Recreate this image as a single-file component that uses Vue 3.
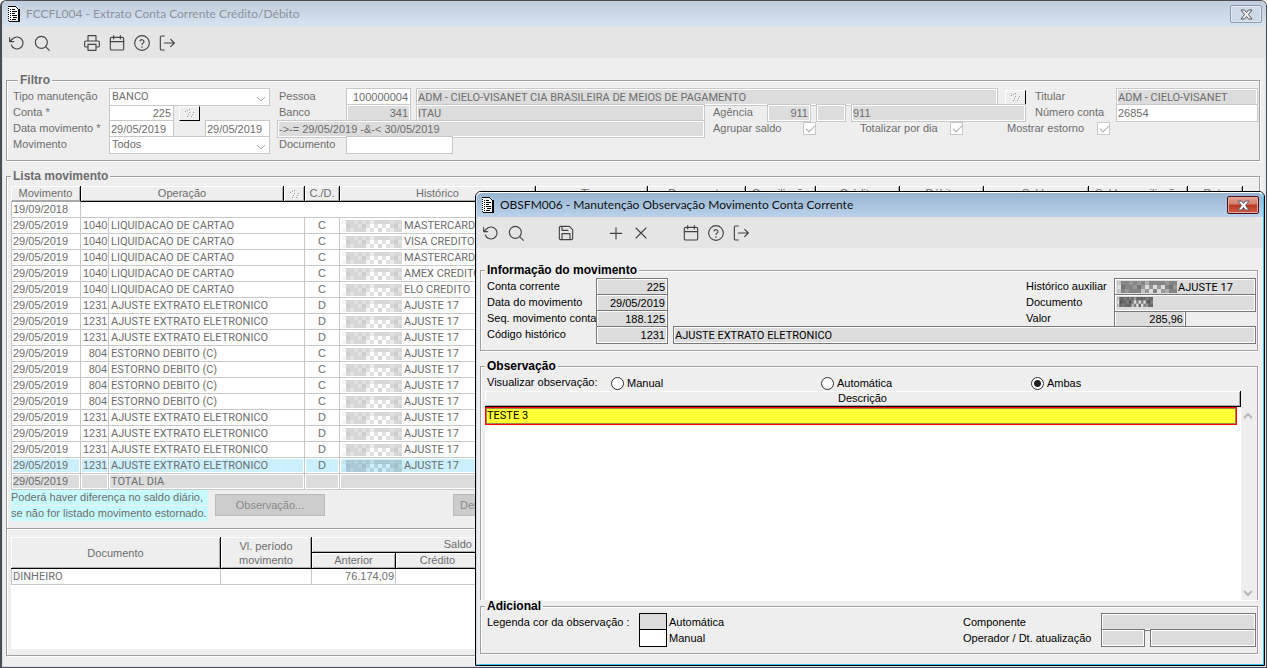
<script setup>
import { ref } from 'vue'

const mainTools = ['undo', 'search', '', 'print', 'calendar', 'help', 'exit']
const dialogTools = ['undo', 'search', '', 'save', '', 'plus', 'close', '', 'calendar', 'help', 'exit']
const toolNames = {
  undo: 'Desfazer',
  search: 'Pesquisar',
  print: 'Imprimir',
  calendar: 'Calendário',
  help: 'Ajuda',
  exit: 'Sair',
  save: 'Salvar',
  plus: 'Incluir',
  close: 'Excluir',
}

const row = (code, name, type, history) => ({ code, name, type, history })
const card = (h) => row('1040', 'LIQUIDACAO DE CARTAO', 'C', h)
const adjust = () => row('1231', 'AJUSTE EXTRATO ELETRONICO', 'D', 'AJUSTE 17')
const reversal = () => row('804', 'ESTORNO DEBITO (C)', 'C', 'AJUSTE 17')
const rows = [
  card('MASTERCARD'),
  card('VISA CREDITO'),
  card('MASTERCARD'),
  card('AMEX CREDITO'),
  card('ELO CREDITO'),
  adjust(), adjust(), adjust(),
  reversal(), reversal(), reversal(), reversal(),
  adjust(), adjust(), adjust(), adjust(),
]
const extraHeads = ['Tipo', 'Documento', 'Conciliação', 'Crédito', 'Débito', 'Saldo', 'Saldo conciliação', 'Data']
const widths = [70, 28, 175, 21, 35, 0, 112, 98, 70, 84, 84, 105, 99, 55]

const shades = [
  [1, 4, 4, 3, 4, 3, 4, 2, 4, 4, 4, 4, 3, 4, 4],
  [0, 5, 4, 4, 3, 5, 3, 0, 3, 0, 3, 0, 4, 5, 3],
  [1, 4, 3, 4, 4, 4, 1, 3, 0, 4, 0, 3, 2, 4, 4],
]
const cells = shades.flatMap((line, y) => line.map((s, x) => ({ x: x * 4, y: y * 4, o: s * 0.055 })))

const view = ref('Ambas')
</script>

<template>
  <svg class="defs" aria-hidden="true">
    <symbol id="undo" viewBox="0 0 24 24"><path d="M1 4v6h6M3.5 15a9 9 0 1 0 2.1-9.4L1 10" /></symbol>
    <symbol id="search" viewBox="0 0 24 24"><circle cx="11" cy="11" r="9" /><path d="M23 23l-5.5-5.5" /></symbol>
    <symbol id="print" viewBox="0 0 24 24"><path d="M6 9V1h12v8M6 18H3a2 2 0 0 1-2-2v-5a2 2 0 0 1 2-2h18a2 2 0 0 1 2 2v5a2 2 0 0 1-2 2h-3M6 14h12v9H6z" /></symbol>
    <symbol id="calendar" viewBox="0 0 24 24"><rect x="2" y="3.5" width="20" height="19" rx="2" /><path d="M7 1v5M17 1v5M2 10h20" /></symbol>
    <symbol id="help" viewBox="0 0 24 24"><circle cx="12" cy="12" r="11" /><path d="M9 9a3.1 3.1 0 0 1 6 1c0 2-3 2.5-3 4.300M12 17.500v1" /></symbol>
    <symbol id="exit" viewBox="0 0 24 24"><path d="M8 1.500H4a2 2 0 0 0-2 2v17a2 2 0 0 0 2 2h4M8 12h15M17.500 6.500L23 12l-5.500 5.500" /></symbol>
    <symbol id="save" viewBox="0 0 24 24"><path d="M20 22H4a2 2 0 0 1-2-2V4a2 2 0 0 1 2-2h13l5 5v13a2 2 0 0 1-2 2zM6 22v-9h12v9M6 2v6h9" /></symbol>
    <symbol id="plus" viewBox="0 0 24 24"><path d="M12 4v17M3.500 12.500h17" /></symbol>
    <symbol id="close" viewBox="0 0 24 24"><path d="M4.500 4.500l15 15M19.500 4.500l-15 15" /></symbol>
    <symbol id="doc" viewBox="0 0 12 16">
      <path fill="#fff" d="M0 0h8l3 3v12H0z" />
      <path fill="#000" d="M0 0h8v1H0zM8 1h1v1H8zM9 2h1v1H9zM10 3h2v13H1v-1h9zM2 3h1v1H2zM4 3h3v1H4zM2 5h1v1H2zM4 5h5v1H4zM2 7h1v1H2zM4 7h3v1H4zM2 9h1v1H2zM4 9h5v1H4zM2 11h1v1H2zM5 11h4v1H5zM2 13h1v1H2zM4 13h4v1H4zM0 2h1v1H0zM0 4h1v1H0zM0 6h1v1H0zM0 8h1v1H0zM0 10h1v1H0zM0 12h1v1H0zM0 14h1v1H0z" />
    </symbol>
    <symbol id="cross" viewBox="0 0 13 11"><path d="M1 1h3.500l2 2.500L8.500 1H12L8.500 5.500 12 10H8.500L6.500 7.500l-2 2.500H1l3.500-4.500z" /></symbol>
    <symbol id="mosaic" viewBox="0 0 60 12" preserveAspectRatio="none">
      <rect v-for="c in cells" :key="c.x + '-' + c.y" :x="c.x" :y="c.y" width="4" height="4" :fill-opacity="c.o" />
    </symbol>
    <symbol id="dots" viewBox="0 0 9 8"><path d="M0 2h1v1H0zM2 1h1v1H2zM4 0h1v1H4zM4 3h1v1H4zM3 5h1v1H3zM2 7h1v1H2zM8 3h1v1H8zM7 5h1v1H7zM6 7h1v1H6z" /></symbol>
    <symbol id="down" viewBox="0 0 10 6"><path d="M1 1l4 4 4-4" /></symbol>
  </svg>

  <main class="window">
    <header class="title">
      <svg class="doc"><use href="#doc" /></svg>
      <h1>FCCFL004 - Extrato Conta Corrente Crédito/Débito</h1>
      <button class="shut" aria-label="Fechar extrato"><svg><use href="#cross" /></svg></button>
    </header>
    <nav class="tools">
      <template v-for="(t, i) in mainTools" :key="i">
        <button v-if="t" :aria-label="toolNames[t]"><svg><use :href="'#' + t" /></svg></button>
        <span v-else class="blank"></span>
      </template>
    </nav>

    <fieldset class="group filter">
      <legend>Filtro</legend>
      <div class="line">
        <label class="first" for="tipo">Tipo manutenção</label>
        <span class="pick"><select id="tipo" class="caps"><option>BANCO</option></select><svg><use href="#down" /></svg></span>
        <label class="second" for="pessoa">Pessoa</label>
        <input id="pessoa" class="num w65" value="100000004">
        <input class="off caps grow gap5" aria-label="Nome da pessoa" value="ADM - CIELO-VISANET CIA BRASILEIRA DE MEIOS DE PAGAMENTO" readonly>
        <button class="tiny gap7" aria-label="Consultar pessoa"><svg><use href="#dots" /></svg></button>
        <label class="third" for="titular">Titular</label>
        <input id="titular" class="off caps w142" value="ADM - CIELO-VISANET" readonly>
      </div>
      <div class="line">
        <label class="first" for="conta">Conta *</label>
        <span class="pair">
          <input id="conta" class="num w65" value="225">
          <button class="tiny gap5" aria-label="Consultar conta"><svg><use href="#dots" /></svg></button>
        </span>
        <label class="second" for="banco">Banco</label>
        <input id="banco" class="off num w65" value="341" readonly>
        <input class="off caps w289 gap5" aria-label="Nome do banco" value="ITAU" readonly>
        <label class="agency" for="agencia">Agência</label>
        <input id="agencia" class="off num w44" value="911" readonly>
        <input class="off w30 gap5" aria-label="Dígito da agência" readonly>
        <input class="off grow gap5" aria-label="Nome da agência" value="911" readonly>
        <label class="third" for="numero">Número conta</label>
        <input id="numero" class="w142" value="26854">
      </div>
      <div class="line">
        <label class="first" for="inicio">Data movimento *</label>
        <span class="pair spread">
          <input id="inicio" class="w65" value="29/05/2019">
          <input class="w65" aria-label="Data final" value="29/05/2019">
        </span>
        <input class="off range" aria-label="Intervalo" value="->-= 29/05/2019 -&amp;-&lt; 30/05/2019" readonly>
        <label class="check"><span>Agrupar saldo</span><input type="checkbox" checked></label>
        <label class="check"><span>Totalizar por dia</span><input type="checkbox" checked></label>
        <label class="check"><span>Mostrar estorno</span><input type="checkbox" checked></label>
      </div>
      <div class="line">
        <label class="first" for="movimento">Movimento</label>
        <span class="pick"><select id="movimento"><option>Todos</option></select><svg><use href="#down" /></svg></span>
        <label class="second" for="documento">Documento</label>
        <input id="documento" class="w107">
      </div>
    </fieldset>

    <fieldset class="group list">
      <legend>Lista movimento</legend>
      <table class="grid moves">
        <colgroup><col v-for="(w, i) in widths" :key="i" :class="'c' + w"></colgroup>
        <thead>
          <tr>
            <th class="soft">Movimento</th>
            <th colspan="2">Operação</th>
            <th><svg class="dots"><use href="#dots" /></svg></th>
            <th>C./D.</th>
            <th>Histórico</th>
            <th v-for="h in extraHeads" :key="h">{{ h }}</th>
          </tr>
        </thead>
        <tbody>
          <tr><td>19/09/2018</td><td colspan="13"></td></tr>
          <tr v-for="(r, i) in rows" :key="i" :class="{ picked: i === rows.length - 1 }">
            <td>29/05/2019</td>
            <td class="right">{{ r.code }}</td>
            <td class="caps" colspan="2">{{ r.name }}</td>
            <td class="mid">{{ r.type }}</td>
            <td class="caps"><svg class="mosaic"><use href="#mosaic" /></svg>{{ r.history }}</td>
            <td v-for="h in extraHeads" :key="h"></td>
          </tr>
          <tr class="total">
            <td>29/05/2019</td><td></td><td class="caps" colspan="2">TOTAL DIA</td><td></td><td></td>
            <td v-for="h in extraHeads" :key="h"></td>
          </tr>
        </tbody>
      </table>

      <div class="actions">
        <p class="note"><span>Poderá haver diferença no saldo diário,</span><span>se não for listado movimento estornado.</span></p>
        <button class="wide" disabled>Observação...</button>
        <button class="wide detail" disabled>Detalhar...</button>
      </div>

      <section class="balances">
        <div class="sheet">
          <table class="grid totals">
            <colgroup><col class="t210"><col class="t91"><col class="t84"><col class="t84"><col class="t84"><col class="t84"><col></colgroup>
            <thead>
              <tr>
                <th rowspan="2">Documento</th>
                <th rowspan="2">Vl. período movimento</th>
                <th colspan="4">Saldo corrente</th>
                <th rowspan="2"></th>
              </tr>
              <tr><th>Anterior</th><th>Crédito</th><th>Débito</th><th>Atual</th></tr>
            </thead>
            <tbody>
              <tr><td class="caps">DINHEIRO</td><td></td><td class="right">76.174,09</td><td></td><td></td><td></td><td></td></tr>
            </tbody>
          </table>
        </div>
      </section>
    </fieldset>

    <section class="dialog" role="dialog" aria-labelledby="dialog-title">
      <div class="frame">
        <header class="title">
          <svg class="doc"><use href="#doc" /></svg>
          <h2 id="dialog-title">OBSFM006 - Manutenção Observação Movimento Conta Corrente</h2>
          <button class="shut" aria-label="Fechar observação"><svg><use href="#cross" /></svg></button>
        </header>
        <nav class="tools">
          <template v-for="(t, i) in dialogTools" :key="i">
            <button v-if="t" :aria-label="toolNames[t]"><svg><use :href="'#' + t" /></svg></button>
            <span v-else class="blank"></span>
          </template>
        </nav>

        <fieldset class="group info">
          <legend>Informação do movimento</legend>
          <div class="line">
            <label class="key" for="corrente">Conta corrente</label>
            <input id="corrente" class="off num w72" value="225" readonly>
            <label class="side" for="auxiliar">Histórico auxiliar</label>
            <span class="masked w142"><svg class="mosaic"><use href="#mosaic" /><use href="#mosaic" /></svg><input id="auxiliar" class="off caps" value="AJUSTE 17" readonly></span>
          </div>
          <div class="line">
            <label class="key" for="data">Data do movimento</label>
            <input id="data" class="off num w72" value="29/05/2019" readonly>
            <label class="side" for="doc-mov">Documento</label>
            <span class="masked w142"><svg class="mosaic short"><use href="#mosaic" /><use href="#mosaic" /><use href="#mosaic" /></svg><input id="doc-mov" class="off" readonly></span>
          </div>
          <div class="line">
            <label class="key" for="seq">Seq. movimento conta</label>
            <input id="seq" class="off num w72" value="188.125" readonly>
            <label class="side" for="valor">Valor</label>
            <span class="slot w142"><input id="valor" class="off num w72" value="285,96" readonly></span>
          </div>
          <div class="line">
            <label class="key" for="codigo">Código histórico</label>
            <input id="codigo" class="off num w72" value="1231" readonly>
            <input class="off caps grow gap5" aria-label="Descrição do histórico" value="AJUSTE EXTRATO ELETRONICO" readonly>
          </div>
        </fieldset>

        <fieldset class="group obs">
          <legend>Observação</legend>
          <div class="line views">
            <span class="caption">Visualizar observação:</span>
            <label v-for="v in ['Manual', 'Automática', 'Ambas']" :key="v" class="radio">
              <input v-model="view" type="radio" name="view" :value="v">{{ v }}
            </label>
          </div>
          <div class="notes">
            <table class="grid">
              <thead><tr><th>Descrição</th></tr></thead>
              <tbody><tr><td><div class="current caps">TESTE 3</div></td></tr></tbody>
            </table>
            <div class="scroll">
              <svg class="up"><use href="#down" /></svg>
              <svg><use href="#down" /></svg>
            </div>
          </div>
        </fieldset>

        <fieldset class="group extra">
          <legend>Adicional</legend>
          <div class="line">
            <span class="caption legend-key">Legenda cor da observação :</span>
            <span class="swatch auto"></span><span class="caption">Automática</span>
            <label class="by" for="componente">Componente</label>
            <input id="componente" class="off w155" readonly>
          </div>
          <div class="line">
            <span class="caption legend-key"></span>
            <span class="swatch"></span><span class="caption">Manual</span>
            <label class="by" for="operador">Operador / Dt. atualização</label>
            <span class="slot w155"><input id="operador" class="off w44" readonly><input class="off grow gap5" aria-label="Data de atualização" readonly></span>
          </div>
        </fieldset>
      </div>
    </section>
  </main>
</template>

<style>
body {
  margin: 0;
  background: #fff;
}
</style>

<style scoped>
.defs { position: absolute; width: 0; height: 0; }
* { box-sizing: border-box; }
.window {
  --ink: #6d6d6d;
  --edge: #c8c8c8;
  position: relative;
  display: flex;
  flex-direction: column;
  height: 100vh;
  margin-right: 1px;
  padding-bottom: 11px;
  border: 1px solid #4b4d52;
  border-left-width: 2px;
  border-radius: 6px 6px 0 0;
  background: #eee;
  box-shadow: inset 1px 0 #d5e0ee, inset -1px -1px #d5e0ee;
  color: var(--ink);
  font: 11px/16px "Liberation Sans", Arial, sans-serif;
}
button, input, select { font: inherit; color: inherit; margin: 0; }
svg { display: block; flex: none; }

.title {
  display: flex;
  flex: none;
  align-items: center;
  height: 26px;
  padding: 0 4px 0 6px;
  border-radius: 5px 5px 0 0;
  background: linear-gradient(#bfcddc, #d7e4f1);
}
.title h1, .title h2 {
  flex: 1;
  margin: 0 0 0 6px;
  color: #8d939a;
  font: 12px/16px Lato, "Open Sans", sans-serif;
}
.doc { width: 12px; height: 16px; }
.shut {
  display: grid;
  place-items: center;
  width: 32px;
  height: 18px;
  padding: 0;
  border: 1px solid #8f9aab;
  border-radius: 2px;
  background: #ccd9e7;
  box-shadow: inset 0 0 0 1px #dfe8f1;
}
.shut svg { width: 13px; height: 11px; fill: #eee; stroke: #55565f; }

.tools {
  display: flex;
  flex: none;
  align-items: center;
  height: 31px;
  margin: 0 1px;
  padding-left: 1px;
  background: #e5e5e5;
}
.tools button {
  display: grid;
  place-items: center;
  width: 25px;
  height: 25px;
  padding: 0;
  border: 0;
  background: none;
}
.tools svg {
  width: 16px;
  height: 16px;
  fill: none;
  stroke: #444;
  stroke-width: 1.700;
  stroke-linecap: round;
  stroke-linejoin: round;
}
.blank { width: 25px; }

.group {
  min-width: 0;
  margin: 0 6px 0 4px;
  padding: 1px 1px 7px 6px;
  border: 1px solid #a0a0a0;
  box-shadow: 1px 1px #fff, inset 1px 1px #fff;
}
.group legend {
  height: 13px;
  margin-left: -2px;
  padding: 0 2px;
  background: #eee;
  font-weight: bold;
  font-size: 12px;
  line-height: 13px;
}
.filter { margin-top: 16px; padding-top: 2px; }
.filter legend { margin-left: 5px; }
.list {
  display: flex;
  flex: 1;
  flex-direction: column;
  margin-top: 9px;
  padding: 3px 0 6px 4px;
}
.list legend { margin-left: 0; }

.line { display: flex; align-items: center; height: 16px; }
.line > label, .caption { flex: none; white-space: nowrap; }
.filter label, .info label, .views .caption { padding-bottom: 2px; }
.first { width: 96px; }
.second { width: 67px; margin-left: 9px; }
.third { width: 81px; margin-left: 9px; }
.agency { width: 54px; margin-left: 8px; }

.line input:not([type]), .pick {
  flex: none;
  height: 18px;
  padding: 0 2px 0 1px;
  border: 1px solid var(--edge);
  border-radius: 0;
  background: #fff;
  outline: 0;
}
.line input.off:not([type]) { background: #dcdcdc; box-shadow: inset 0 0 0 1px #fff; }
.line input.grow:not([type]) { flex: 1; min-width: 0; }
.line input.num { text-align: right; }
.caps, .line input.caps, .grid td.caps { font-family: Roboto, "Liberation Sans", sans-serif; }
.w30 { width: 30px; }
.w44 { width: 44px; }
.w65 { width: 65px; }
.w72 { width: 72px; }
.w107 { width: 107px; }
.w142 { width: 142px; }
.w155 { width: 155px; }
.w289 { width: 289px; }
.gap5 { margin-left: 5px; }
.gap7 { margin-left: 7px; }
.filter .pick { position: relative; width: 161px; padding: 0; }
.pick select {
  display: block;
  width: 100%;
  height: 15px;
  padding: 0 2px;
  border: 0;
  appearance: none;
  background: none;
  line-height: 15px;
}
.pick svg {
  position: absolute;
  right: 3px;
  bottom: 3px;
  width: 10px;
  height: 6px;
  fill: none;
  stroke: #aaa;
}
.pair { display: flex; flex: none; align-items: center; width: 161px; }
.spread { justify-content: space-between; }
.line input.range:not([type]) { width: 428px; margin-left: 7px; }
.tiny {
  display: grid;
  flex: none;
  place-items: center;
  width: 21px;
  height: 15px;
  padding: 0;
  border: 1px solid #fff;
  border-right-color: #000;
  border-bottom-color: #000;
  background: #eee;
}
.tiny svg, .dots { width: 9px; height: 8px; fill: #999; }
.dots { margin: 0 auto; }
.check { display: flex; align-items: center; width: 103px; margin: 0 36px 0 8px; }
.check input {
  width: 13px;
  height: 13px;
  margin-left: auto;
  border: 1px solid var(--edge);
  appearance: none;
  background: #fff;
}
.check input:checked::after {
  content: "";
  display: block;
  width: 4px;
  height: 8px;
  margin: 0 0 0 4px;
  border: solid #aaa;
  border-width: 0 1px 1px 0;
  transform: rotate(45deg);
}

.grid { border-spacing: 0; table-layout: fixed; width: 100%; }
.grid th {
  height: 16px;
  padding: 0;
  border-right: 1px solid #000;
  border-bottom: 1px solid #000;
  background: #eee;
  box-shadow: inset 1px 1px #fff, inset -1px -1px #aaa;
  font-weight: normal;
  line-height: 15px;
  overflow: hidden;
  white-space: nowrap;
}
.grid th.soft { border-bottom-color: #aaa; }
.grid td {
  height: 16px;
  padding: 0 2px;
  border-right: 1px solid var(--edge);
  border-bottom: 1px solid var(--edge);
  background: #fff;
  line-height: 15px;
  overflow: hidden;
  white-space: nowrap;
}
.grid td:first-child { padding-left: 1px; border-left: 1px solid var(--edge); }
.grid .right { padding-right: 1px; text-align: right; }
.grid .mid { text-align: center; }
.grid .picked td { background: #cbeffd; box-shadow: inset 0 0 0 1px #fff; }
.grid .total td { background: #dcdcdc; box-shadow: inset 0 0 0 1px #fff; }
.moves { width: calc(100% - 16px); flex: none; }
.c70 { width: 70px; }
.c28 { width: 28px; }
.c175 { width: 175px; }
.c21 { width: 21px; }
.c35 { width: 35px; }
.c112 { width: 112px; }
.c98 { width: 98px; }
.c84 { width: 84px; }
.c105 { width: 105px; }
.c99 { width: 99px; }
.c55 { width: 55px; }
.mosaic {
  display: inline-block;
  width: 60px;
  height: 12px;
  margin-right: 2px;
  opacity: 0.7;
  vertical-align: middle;
}
.masked .mosaic { margin: 0; opacity: 1; }

.actions { display: flex; flex: none; align-items: flex-start; height: 38px; }
.note { width: 197px; margin: 0 7px 0 0; }
.note span {
  display: block;
  background: #c6fafd;
  line-height: 15px;
  margin-bottom: 1px;
  white-space: nowrap;
}
.wide {
  width: 110px;
  height: 22px;
  margin-top: 4px;
  padding: 0;
  border: 1px solid #bbb;
  background: #ccc;
  color: #8a8a8a;
}
.detail { margin-left: 128px; padding-left: 6px; text-align: left; }
.balances {
  display: flex;
  flex: 1;
  margin-left: -4px;
  padding: 8px 17px 0 4px;
  border-top: 1px solid #a0a0a0;
  box-shadow: inset 0 1px #fff;
}
.sheet { flex: 1; background: #fff; }
.totals thead th { white-space: normal; }
.totals thead th[rowspan] { line-height: 14px; }
.t210 { width: 210px; }
.t91 { width: 91px; }
.t84 { width: 84px; }

.dialog {
  --ink: #000;
  --edge: #777;
  position: absolute;
  inset: 190px 1px 1px 473px;
  display: flex;
  border: 1px solid #000;
  border-radius: 6px 6px 0 0;
  background: #eee;
  color: #000;
}
.frame {
  display: flex;
  flex: 1;
  flex-direction: column;
  min-width: 0;
  padding-bottom: 10px;
  border: 1px solid;
  border-color: #fff #35c5e8 #35c5e8 #c4d8ee;
  border-radius: 5px 5px 0 0;
}
.dialog .title { height: 24px; padding-left: 5px; background: linear-gradient(#98b4cf, #bad2ec); }
.dialog .title h2 { color: #111; }
.dialog .shut {
  border-color: #4a141c;
  background: linear-gradient(#e3a396 0, #d4796a 45%, #bb3722 50%, #cf5c45);
  box-shadow: inset 0 0 0 1px #e0a79c;
}
.dialog .shut svg { fill: #fff; stroke: #555b70; }
.dialog .tools { margin: 0; }
.dialog .group { margin-right: 5px; margin-left: 3px; }
.dialog .group legend { margin-left: -2px; }
.dialog .info { margin-top: 16px; padding-top: 2px; }
.key { width: 109px; }
.side { width: 88px; margin-left: auto; }
.masked, .slot { display: flex; flex: none; }
.masked { position: relative; }
.line .masked input:not([type]) { width: 100%; padding-left: 63px; }
.masked .mosaic { position: absolute; left: 3px; top: 3px; }
.masked .short { width: 36px; height: 10px; }
.dialog .obs {
  display: flex;
  flex: 1;
  flex-direction: column;
  margin-top: 9px;
  padding: 2px 0 0 4px;
  border-bottom: 0;
}
.dialog .obs legend { margin-left: 0; }
.views { flex: none; }
.views .caption { width: 124px; margin-left: 2px; }
.radio { display: flex; align-items: center; gap: 3px; width: 210px; }
.radio input {
  width: 13px;
  height: 13px;
  border: 1px solid #333;
  border-radius: 50%;
  appearance: none;
  background: #fff;
}
.radio input:checked { background: radial-gradient(circle, #222 0 3px, #fff 4px); }
.notes { display: flex; flex: 1; background: #fff; }
.notes .grid { flex: 1; align-self: flex-start; width: auto; }
.notes td, .notes td:first-child { padding: 0 4px 0 0; border: 0; }
.current {
  padding-left: 1px;
  border: 1px solid #f00;
  outline: 1px solid #9a8a50;
  outline-offset: -2px;
  background: #ff3;
  line-height: 16px;
}
.scroll {
  display: flex;
  flex-direction: column;
  align-items: center;
  justify-content: space-between;
  width: 16px;
  padding: 22px 2px 4px 0;
  background: #eee;
}
.scroll svg { width: 10px; height: 6px; fill: none; stroke: #b5b5b5; stroke-width: 2; }
.scroll .up { transform: rotate(180deg); }
.dialog .extra { padding-top: 1px; }
.legend-key { width: 152px; }
.swatch {
  flex: none;
  width: 28px;
  height: 18px;
  margin-right: 2px;
  border: 1px solid #000;
  background: #fff;
}
.swatch.auto { background: #dcdcdc; }
.by { width: 138px; margin-left: auto; }
</style>
